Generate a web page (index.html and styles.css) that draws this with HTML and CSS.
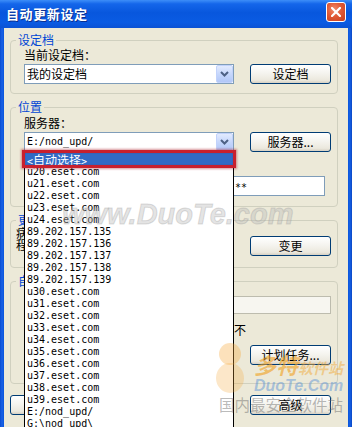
FILE: index.html
```html
<!DOCTYPE html>
<html lang="zh-CN">
<head>
<meta charset="utf-8">
<title>自动更新设定</title>
<link rel="stylesheet" href="styles.css">
</head>
<body>
<div class="window">
  <div class="titlebar">
    <span class="title">自动更新设定</span>
    <span class="close"><svg width="10" height="10" viewBox="0 0 10 10"><path d="M1 1L9 9M9 1L1 9" stroke="#fff" stroke-width="2.2" stroke-linecap="square"/></svg></span>
  </div>
  <div class="frame">
    <fieldset class="group g1">
      <legend>设定档</legend>
      <div class="indent">
        <div class="label">当前设定档：</div>
        <div class="row">
          <div class="combo"><span class="val">我的设定档</span><span class="arrow"><svg width="9" height="6" viewBox="0 0 9 6"><path d="M1 1L4.5 4.5L8 1" fill="none" stroke="#4d6185" stroke-width="2"/></svg></span></div>
          <button class="btn">设定档</button>
        </div>
      </div>
    </fieldset>

    <fieldset class="group g2">
      <legend>位置</legend>
      <div class="indent">
        <div class="label lbl2">服务器：</div>
        <div class="row">
          <div class="combo"><span class="val mono">E:/nod_upd/</span><span class="arrow"><svg width="9" height="6" viewBox="0 0 9 6"><path d="M1 1L4.5 4.5L8 1" fill="none" stroke="#4d6185" stroke-width="2"/></svg></span></div>
          <button class="btn">服务器...</button>
        </div>
        <div class="row pwrow">
          <div class="field pw mono">**</div>
        </div>
      </div>
    </fieldset>

    <fieldset class="group g3">
      <legend>更新设置</legend>
      <div class="row top">
        <div class="lines">
          <div>病毒库更新：</div>
          <div>程序组件升级：</div>
        </div>
        <button class="btn b3">变更</button>
      </div>
    </fieldset>

    <fieldset class="group g4">
      <legend>自动更新</legend>
      <div class="row end f4row"><div class="field f4"></div></div>
      <div class="label t4">计划任务将在网络连接时自动运行而不</div>
      <div class="row end b4row"><button class="btn">计划任务...</button></div>
    </fieldset>

    <div class="row bottom">
      <button class="btn">默认值</button>
      <button class="btn">高级</button>
    </div>
  </div>

  <div class="dropdown">
    <div class="item sel">&lt;<span class="cj">自动选择</span>&gt;</div>
    <div class="item">u20.eset.com</div>
    <div class="item">u21.eset.com</div>
    <div class="item">u22.eset.com</div>
    <div class="item">u23.eset.com</div>
    <div class="item">u24.eset.com</div>
    <div class="item">89.202.157.135</div>
    <div class="item">89.202.157.136</div>
    <div class="item">89.202.157.137</div>
    <div class="item">89.202.157.138</div>
    <div class="item">89.202.157.139</div>
    <div class="item">u30.eset.com</div>
    <div class="item">u31.eset.com</div>
    <div class="item">u32.eset.com</div>
    <div class="item">u33.eset.com</div>
    <div class="item">u34.eset.com</div>
    <div class="item">u35.eset.com</div>
    <div class="item">u36.eset.com</div>
    <div class="item">u37.eset.com</div>
    <div class="item">u38.eset.com</div>
    <div class="item">u39.eset.com</div>
    <div class="item">E:/nod_upd/</div>
    <div class="item">G:\nod_upd\</div>
  </div>
  <div class="redmark"></div>

  <div class="wm-main">www.DuoTe.com</div>
  <div class="wm-logo">
    <svg class="wm-mascot" width="36" height="56" viewBox="0 0 36 56"><circle cx="18" cy="14" r="11" fill="rgba(245,170,60,0.35)"/><ellipse cx="18" cy="38" rx="14" ry="15" fill="rgba(245,170,60,0.28)"/></svg>
    <div class="wm-name"><span class="big">多特</span><span class="small">软件站</span></div>
    <div class="wm-en">DuoTe.Com</div>
    <div class="wm-slogan">国内最安全软件站</div>
  </div>
</div>
</body>
</html>
```

FILE: styles.css
```css
* { box-sizing: border-box; }
html, body { margin: 0; padding: 0; }
body {
  width: 352px;
  height: 427px;
  overflow: hidden;
  font-family: "Noto Sans CJK SC", sans-serif;
  font-size: 12px;
  color: #000;
  background: #ece9d8;
}
.window {
  position: relative;
  width: 352px;
  height: 427px;
  overflow: hidden;
  display: flex;
  flex-direction: column;
  background: linear-gradient(to right, #0a4cd0 0, #1a62e6 2px, #0a55dc 4px, #0a55dc 348px, #1560e4 350px, #0a46c4 352px);
}
.titlebar {
  height: 28px;
  flex: none;
  display: flex;
  justify-content: space-between;
  padding: 0 6px;
  background: linear-gradient(to bottom, #3d8ef8 0%, #1466ea 14%, #0857dd 45%, #0a5be3 80%, #0b52d4 100%);
  color: #fff;
}
.title {
  font-weight: bold;
  font-size: 13px;
  line-height: 28px;
  letter-spacing: 0.6px;
  text-shadow: 1px 1px 0 #0a2f8f;
}
.close {
  margin-top: 2px;
  width: 20px;
  height: 20px;
  border: 1px solid #fff;
  border-radius: 3px;
  background: radial-gradient(circle at 40% 35%, #f08a6a 0%, #e05a36 45%, #c63d1c 100%);
  display: flex;
  align-items: center;
  justify-content: center;
}
.frame {
  flex: 1;
  margin: 0 4px;
  background: #ece9d8;
  padding: 6px 10px 0 6px;
  display: flex;
  flex-direction: column;
}
.group {
  margin: 0;
  border: 1px solid #d0d0bf;
  border-radius: 4px;
  padding: 0 6px 10px 5px;
  min-width: 0;
}
.group + .group { margin-top: 7px; }
legend {
  padding: 0 2px;
  font-size: 12px;
  line-height: 12px;
  color: #0046d5;
}
.g1 { padding-bottom: 9px; }
.g2 { padding-bottom: 10px; }
.g3 { padding-bottom: 11px; }
.g4 { padding-bottom: 18px; }
.indent { padding: 2px 0 0 8px; }
.label { line-height: 14px; }
.lbl2 { margin-top: 1px; }
.row {
  display: flex;
  justify-content: space-between;
  align-items: center;
  margin-top: 2px;
}
.row.top { align-items: flex-start; margin-top: 0; }
.row.end { justify-content: flex-end; }
.combo {
  width: 210px;
  height: 20px;
  border: 1px solid #7f9db9;
  background: #fff;
  display: flex;
  align-items: center;
}
.combo .val {
  flex: 1;
  padding-left: 2px;
  line-height: 14px;
  white-space: nowrap;
}
.arrow {
  width: 17px;
  height: 18px;
  border: 1px solid #c1d2fb;
  border-radius: 2px;
  background: linear-gradient(to bottom, #e2ebfe 0%, #c6d7fc 50%, #b2c7f8 100%);
  display: flex;
  align-items: center;
  justify-content: center;
}
.mono {
  font-family: "DejaVu Sans Mono", "Liberation Mono", monospace;
  font-size: 10px;
}
.btn {
  width: 81px;
  height: 20px;
  margin: 0;
  padding: 0;
  border: 1px solid #003c74;
  border-radius: 3px;
  background: linear-gradient(to bottom, #ffffff 0%, #f5f4ef 45%, #ebe8dd 85%, #d6d0c3 100%);
  font-family: "Noto Sans CJK SC", sans-serif;
  font-size: 12px;
  line-height: 16px;
  color: #000;
  text-align: center;
}
.pwrow {
  margin-top: 24px;
  justify-content: flex-end;
  padding-right: 6px;
}
.field {
  height: 20px;
  border: 1px solid #7f9db9;
  background: #fff;
}
.pw {
  width: 96px;
  padding: 5px 0 0 5px;
  line-height: 12px;
}
.lines { line-height: 12px; padding-top: 1px; }
.b3 { margin-top: 10px; }
.f4row { margin-top: 9px; }
.f4 {
  width: 200px;
  height: 18px;
  border-color: #bdbcae;
  background: #f7f6f0;
}
.t4 { margin-top: 9px; margin-left: 26px; white-space: nowrap; }
.b4row { margin-top: 8px; }
.bottom {
  margin-top: 11px;
  padding-right: 7px;
}

/* open drop-down list */
.dropdown {
  position: absolute;
  left: 24px;
  top: 152px;
  width: 210px;
  height: 290px;
  border: 1px solid #000;
  background: #fff;
}
.item {
  height: 12px;
  padding: 2px 0 0 2px;
  line-height: 10px;
  font-family: "DejaVu Sans Mono", "Liberation Mono", "Noto Sans CJK SC", monospace;
  font-size: 10px;
  white-space: nowrap;
}
.item.sel { background: #316ac5; color: #fff; }
.cj {
  font-family: "Noto Sans CJK SC", sans-serif;
  font-size: 12px;
  line-height: 10px;
}
.redmark {
  position: absolute;
  left: 22px;
  top: 150px;
  width: 214px;
  height: 18px;
  border: 3px solid #c8202e;
  box-shadow: 0 0 2px 1px rgba(170, 20, 30, 0.45), inset 0 0 1px rgba(120, 0, 0, 0.6);
}

/* watermarks */
.wm-main {
  position: absolute;
  left: 62px;
  top: 200px;
  font-family: "Liberation Sans", sans-serif;
  font-size: 29px;
  line-height: 29px;
  font-weight: bold;
  font-style: italic;
  color: rgba(185, 185, 185, 0.4);
  -webkit-text-stroke: 1px rgba(150, 150, 150, 0.3);
  white-space: nowrap;
}
.wm-logo {
  position: absolute;
  left: 212px;
  top: 340px;
  width: 136px;
  height: 80px;
}
.wm-mascot { position: absolute; left: 0; top: 0; }
.wm-name {
  position: absolute;
  left: 42px;
  top: 12px;
  white-space: nowrap;
  font-weight: bold;
  font-style: italic;
  color: rgba(240, 160, 30, 0.6);
}
.wm-name .big { font-size: 22px; line-height: 24px; }
.wm-name .small { font-size: 15px; line-height: 24px; color: rgba(240, 170, 60, 0.5); }
.wm-en {
  position: absolute;
  left: 42px;
  top: 38px;
  font-family: "Liberation Sans", sans-serif;
  font-weight: bold;
  font-style: italic;
  font-size: 16px;
  line-height: 16px;
  color: rgba(80, 140, 215, 0.45);
}
.wm-slogan {
  position: absolute;
  left: 7px;
  top: 56px;
  font-size: 15.5px;
  line-height: 17px;
  white-space: nowrap;
  color: rgba(100, 100, 100, 0.45);
}
```
